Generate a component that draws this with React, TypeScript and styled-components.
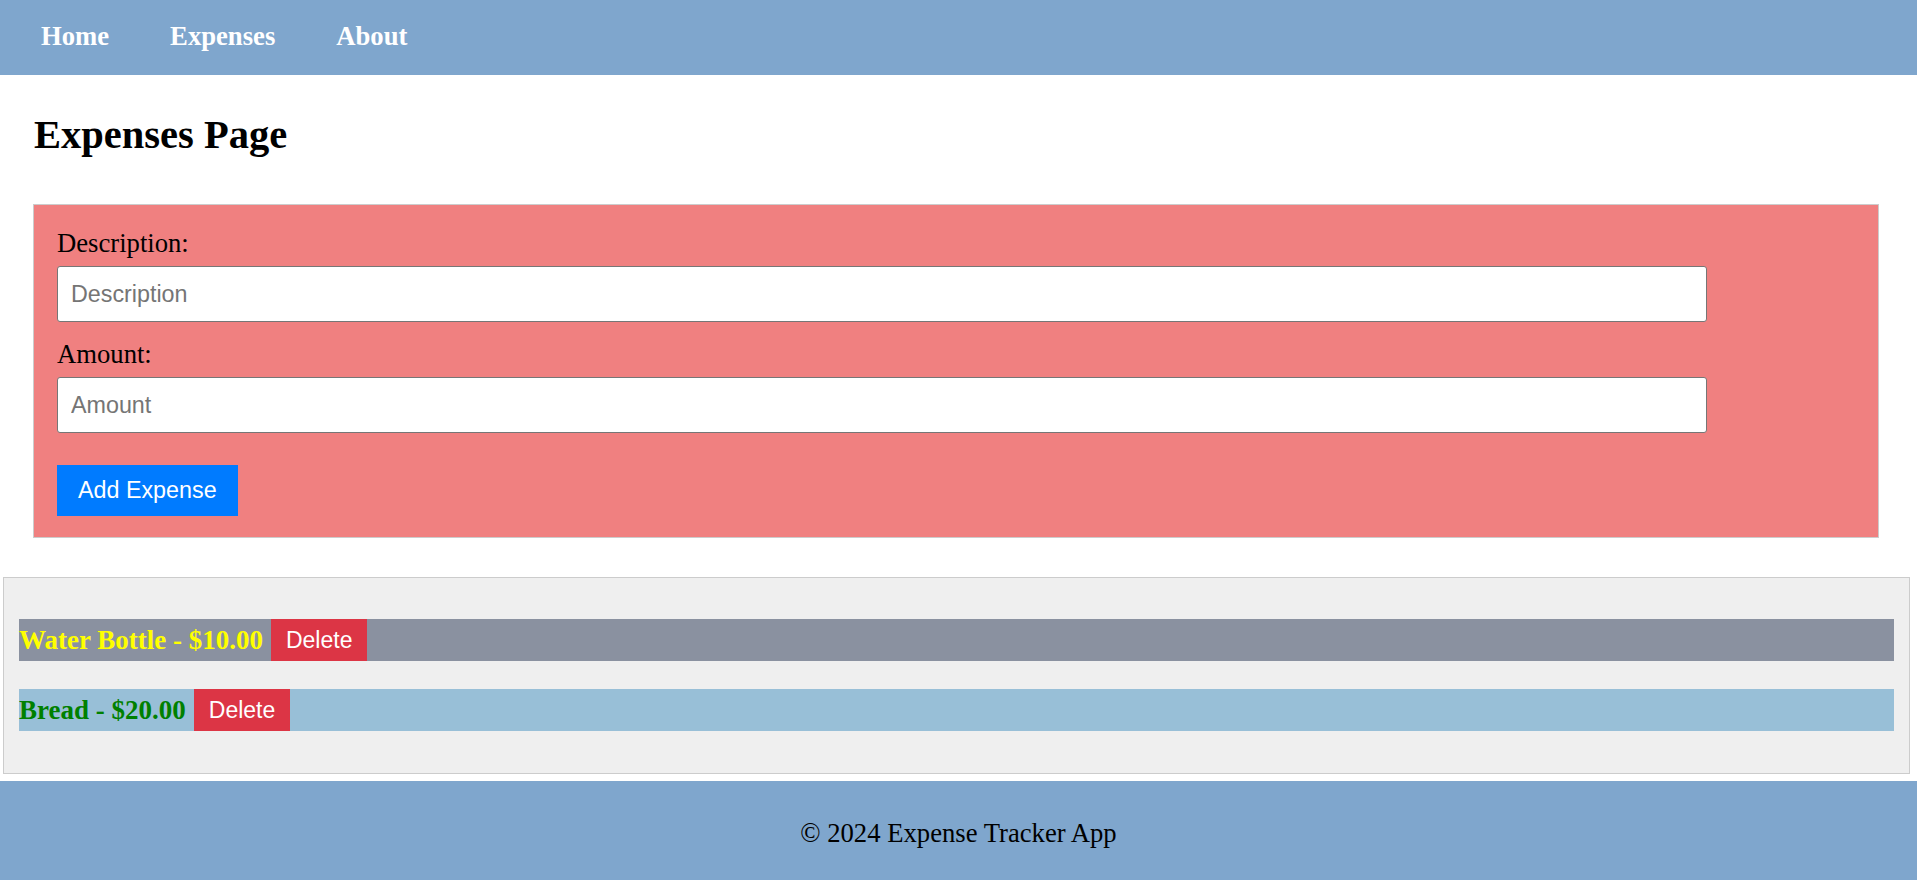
import { FC, useState, FormEvent } from "react";
import styled, { createGlobalStyle } from "styled-components";

const GlobalStyle = createGlobalStyle`
  body {
    margin: 0;
    background: #ffffff;
    font-family: "Liberation Serif", "Times New Roman", serif;
  }
`;

type Expense = {
  id: number;
  description: string;
  amount: number;
};

const Nav = styled.nav`
  display: flex;
  align-items: center;
  height: 75px;
  padding: 0 0 3px 41px;
  box-sizing: border-box;
  background: #7fa6cd;
  gap: 61px;
`;

const NavLink = styled.a`
  color: #ffffff;
  font-weight: bold;
  font-size: 26.67px;
  text-decoration: none;
  cursor: pointer;
`;

const Main = styled.main`
  padding: 0 38px 0 33px;
`;

const Title = styled.h1`
  margin: 37px 0 46px 1px;
  font-size: 40.5px;
  line-height: 46px;
  font-weight: bold;
  color: #000;
`;

const Form = styled.form`
  background: #f08080;
  border: 1px solid #cccccc;
  padding: 23px 23px 21px;
`;

const Field = styled.div`
  & + & {
    margin-top: 17px;
  }
`;

const Label = styled.label`
  display: block;
  font-size: 26.67px;
  line-height: 30px;
  margin-bottom: 8px;
  color: #000;
`;

const Input = styled.input`
  display: block;
  width: 91.75%;
  height: 56px;
  box-sizing: border-box;
  padding: 0 13px;
  border: 1px solid #767676;
  border-radius: 3px;
  font-family: "Liberation Sans", Arial, sans-serif;
  font-size: 23.3px;
  background: #fff;

  &::placeholder {
    color: #757575;
  }
`;

const AddButton = styled.button`
  margin-top: 32px;
  padding: 12px 21px 13px;
  border: none;
  background: #007bff;
  color: #ffffff;
  font-family: "Liberation Sans", Arial, sans-serif;
  font-size: 23.3px;
  line-height: 26px;
  cursor: pointer;
`;

const ListBox = styled.ul`
  list-style: none;
  margin: 39px 7px 7px 3px;
  padding: 41px 15px 42px;
  background: #efefef;
  border: 1px solid #cccccc;
  display: flex;
  flex-direction: column;
  gap: 28px;
`;

const Row = styled.li<{ $bg: string; $fg: string }>`
  display: flex;
  align-items: center;
  height: 42px;
  background: ${(p) => p.$bg};
  color: ${(p) => p.$fg};
  font-size: 27px;
  font-weight: bold;
`;

const DeleteButton = styled.button`
  height: 42px;
  margin-left: 8px;
  padding: 0 15px;
  border: none;
  background: #dc3545;
  color: #ffffff;
  font-family: "Liberation Sans", Arial, sans-serif;
  font-size: 23px;
  cursor: pointer;
`;

const Footer = styled.footer`
  background: #7fa6cd;
  padding: 37px 0;
  text-align: center;
  font-size: 26.67px;
  line-height: 30px;
  color: #000;
`;

const rowColors = [
  { bg: "#8a91a0", fg: "#ffff00" },
  { bg: "#98bfd7", fg: "#008000" },
];

const App: FC<{}> = () => {
  const [expenses, setExpenses] = useState<Expense[]>([
    { id: 1, description: "Water Bottle", amount: 10 },
    { id: 2, description: "Bread", amount: 20 },
  ]);
  const [description, setDescription] = useState("");
  const [amount, setAmount] = useState("");

  const submitHandler = (e: FormEvent) => {
    e.preventDefault();
    const value = parseFloat(amount);
    if (!description || isNaN(value)) return;
    setExpenses([...expenses, { id: Date.now(), description, amount: value }]);
    setDescription("");
    setAmount("");
  };

  const removeExpense = (id: number) => {
    setExpenses(expenses.filter((x) => x.id !== id));
  };

  return (
    <>
      <GlobalStyle />
      <Nav>
        <NavLink>Home</NavLink>
        <NavLink>Expenses</NavLink>
        <NavLink>About</NavLink>
      </Nav>

      <Main>
        <Title>Expenses Page</Title>
        <Form onSubmit={submitHandler}>
          <Field>
            <Label htmlFor="description">Description:</Label>
            <Input
              id="description"
              placeholder="Description"
              value={description}
              onChange={(e) => setDescription(e.target.value)}
            />
          </Field>
          <Field>
            <Label htmlFor="amount">Amount:</Label>
            <Input
              id="amount"
              placeholder="Amount"
              value={amount}
              onChange={(e) => setAmount(e.target.value)}
            />
          </Field>
          <AddButton type="submit">Add Expense</AddButton>
        </Form>
      </Main>

      <ListBox>
        {expenses.map((item, i) => {
          const c = rowColors[i % rowColors.length];
          return (
            <Row key={item.id} $bg={c.bg} $fg={c.fg}>
              {item.description} - ${item.amount.toFixed(2)}
              <DeleteButton onClick={() => removeExpense(item.id)}>Delete</DeleteButton>
            </Row>
          );
        })}
      </ListBox>

      <Footer>© 2024 Expense Tracker App</Footer>
    </>
  );
};

export default App;
